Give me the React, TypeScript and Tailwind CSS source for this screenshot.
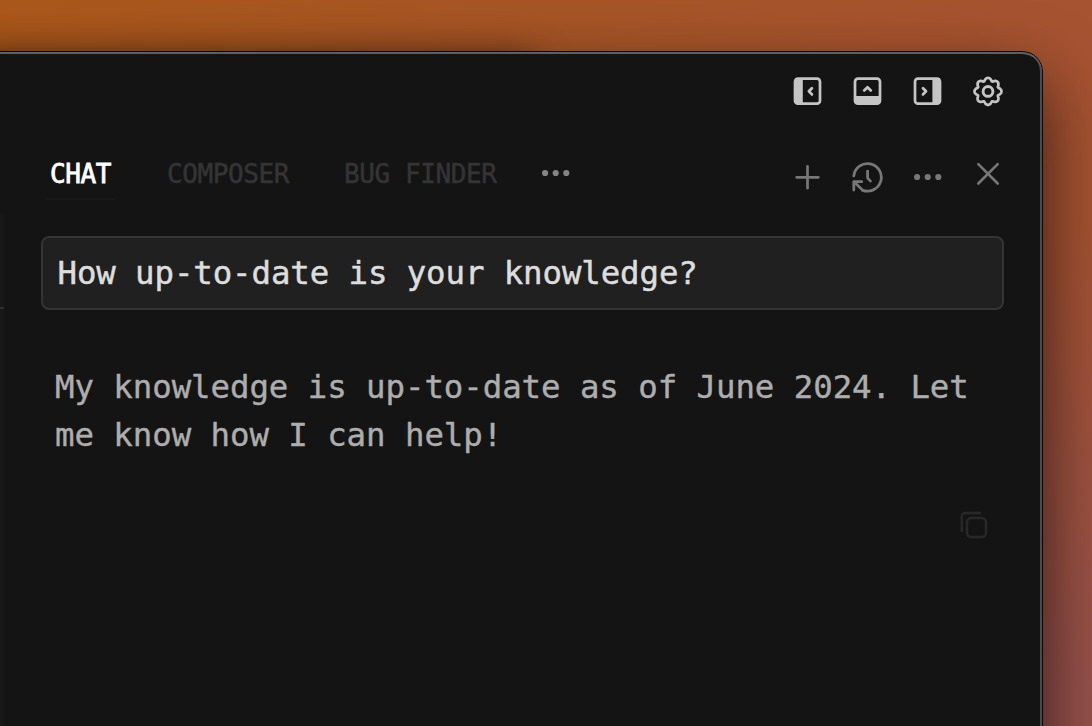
import type { ReactNode } from 'react'

const tabs = ['CHAT', 'COMPOSER', 'BUG FINDER']

// eight rounded teeth, traced as a wave around the hub
const gearPath =
  'M' +
  Array.from({ length: 160 }, (_, i) => {
    const a = (i / 160) * Math.PI * 2
    // flattened wave: wide teeth, narrow notches
    const r = 12.1 + 1.4 * Math.cos(8 * a)
    const t = a - 0.045 * Math.sin(8 * a) * -1
    return `${(r * Math.cos(t)).toFixed(2)} ${(r * Math.sin(t)).toFixed(2)}`
  }).join('L') +
  'Z'

function Dots() {
  return (
    <svg width="30" height="8" viewBox="0 0 30 8" fill="currentColor">
      <circle cx="4.1" cy="4" r="3.1" />
      <circle cx="14.7" cy="4" r="3.1" />
      <circle cx="25.3" cy="4" r="3.1" />
    </svg>
  )
}

function PanelIcon({ fill, chevron }: { fill: string; chevron: string }) {
  return (
    <svg width="30" height="30" viewBox="0 0 30 30" fill="none" stroke="currentColor">
      <rect x="2" y="2.7" width="25" height="25" rx="3" strokeWidth="2.7" />
      <path d={fill} fill="currentColor" stroke="none" />
      <path d={chevron} strokeWidth="2.8" strokeLinecap="round" strokeLinejoin="round" />
    </svg>
  )
}

function GearIcon() {
  return (
    <svg width="32" height="32" viewBox="-16 -16.4 32 32" fill="none" stroke="currentColor" strokeWidth="2.7" strokeLinejoin="round">
      <circle r="4.9" strokeWidth="2.9" />
      <path d={gearPath} />
    </svg>
  )
}

function HistoryIcon() {
  return (
    <svg width="32" height="32" viewBox="0 0 32 32" fill="none" stroke="currentColor" strokeWidth="2.8" strokeLinecap="round" strokeLinejoin="round">
      <path d="M1.8 14.8A13.8 13.8 0 1 1 10.2 29.1M1.8 29V20.7H9.7M2.4 21.2L9.2 27.8" />
      <path d="M15.6 10.1V17.1L18.5 20.1" />
    </svg>
  )
}

function IconCell({ children }: { children: ReactNode }) {
  return <button className="flex h-8 w-[60px] items-center justify-center">{children}</button>
}

export default function App() {
  return (
    <div className="relative isolate h-[726px] w-[1092px] overflow-hidden bg-[linear-gradient(180deg,transparent_30%,#98524c_95%),linear-gradient(90deg,#ab581b_0%,#a75526_50%,#a65332_100%)] pt-[52px] font-['DejaVu_Sans_Mono',monospace]">
      {/* shadow of the window stacked behind */}
      <div className="absolute top-[64px] -left-20 -z-10 h-[600px] w-[612px] rounded-2xl shadow-[0_0_36px_6px_rgba(0,0,0,0.5)]" />
      <div className="-ml-10 h-[760px] w-[1082px] rounded-tr-[20px] bg-[#141414] shadow-[0_0_0_1px_#0a0705,inset_0_2px_0_#5f5f5f,inset_-2px_0_0_#4b4b4b,0_30px_70px_rgba(0,0,0,0.7)]">
        <div className="flex h-full pl-10">
          <div className="mt-[162px] w-1 shrink-0 bg-[#171717]">
            <div className="mt-[93px] h-0.5 bg-[#303030]" />
          </div>

          <div className="min-w-0 flex-1 pl-[37px]">
            <div className="flex h-[88px] justify-end pt-[23px] pr-6 text-[#c5c5c5]">
              <IconCell><PanelIcon fill="M2 2H9.8V28H2Z" chevron="M18.9 12.2L15.9 15.3L18.9 18.4" /></IconCell>
              <IconCell><PanelIcon fill="M2 20H27V28H2Z" chevron="M11.2 14.4L14.5 11.3L17.8 14.4" /></IconCell>
              <IconCell><PanelIcon fill="M19.4 2H27V28H19.4Z" chevron="M10 12.2L13 15.3L10 18.4" /></IconCell>
              <IconCell><GearIcon /></IconCell>
            </div>

            <div className="flex h-24 justify-between pr-6">
              <div className="flex items-start pt-[13px] pl-[5px] text-[26px] tracking-[-0.4px]">
                {tabs.map((tab, i) => (
                  <button
                    key={tab}
                    className={
                      i === 0
                        ? 'mr-12 flex h-[47px] border-b-2 border-[#191919] px-1 leading-[42px] text-white [-webkit-text-stroke:0.8px]'
                        : 'mr-[47px] flex h-[47px] px-1 leading-[42px] text-[#343434] [-webkit-text-stroke:0.5px]'
                    }
                  >
                    {tab}
                  </button>
                ))}
                <button className="-ml-[7px] flex h-10 items-center text-[#858585]"><Dots /></button>
              </div>
              <div className="flex pt-[21px] text-[#777777]">
                <IconCell>
                  <svg width="26" height="26" viewBox="0 0 26 26" stroke="currentColor" strokeWidth="2.7" strokeLinecap="round"><path d="M1.6 13.3H23.4M12.5 2.4V24.2" /></svg>
                </IconCell>
                <IconCell><HistoryIcon /></IconCell>
                <IconCell><Dots /></IconCell>
                <IconCell>
                  <svg className="mb-[7px]" width="24" height="24" viewBox="0 0 24 24" stroke="currentColor" strokeWidth="2.6" strokeLinecap="round"><path d="M2.3 2.1L21.7 21.5M21.7 2.1L2.3 21.5" /></svg>
                </IconCell>
              </div>
            </div>

            <div className="h-[74px] w-[963px] rounded-lg border-2 border-[#343434] bg-[#202020] pt-[9px] pl-[14.5px] text-[32.4px] leading-[52px] tracking-[-0.1px] text-[#dddddd] [-webkit-text-stroke:0.5px]">
              How up-to-date is your knowledge?
            </div>

            <p className="mt-[53px] ml-[14px] w-[940px] text-[32.4px] leading-[48px] tracking-[-0.06px] text-[#adadad] [-webkit-text-stroke:0.4px]">
              My knowledge is up-to-date as of June 2024. Let me know how I can help!
            </p>

            <div className="mt-[52px] flex justify-end pr-[54px] text-[#282828]">
              <svg width="28" height="28" viewBox="0 0 28 28" fill="none" stroke="currentColor" strokeWidth="2.5" strokeLinecap="round">
                <rect x="7" y="7" width="19" height="19" rx="4" />
                <path d="M1.8 20V5.5Q1.8 2 5.5 2H20" />
              </svg>
            </div>
          </div>
        </div>
      </div>
    </div>
  )
}
